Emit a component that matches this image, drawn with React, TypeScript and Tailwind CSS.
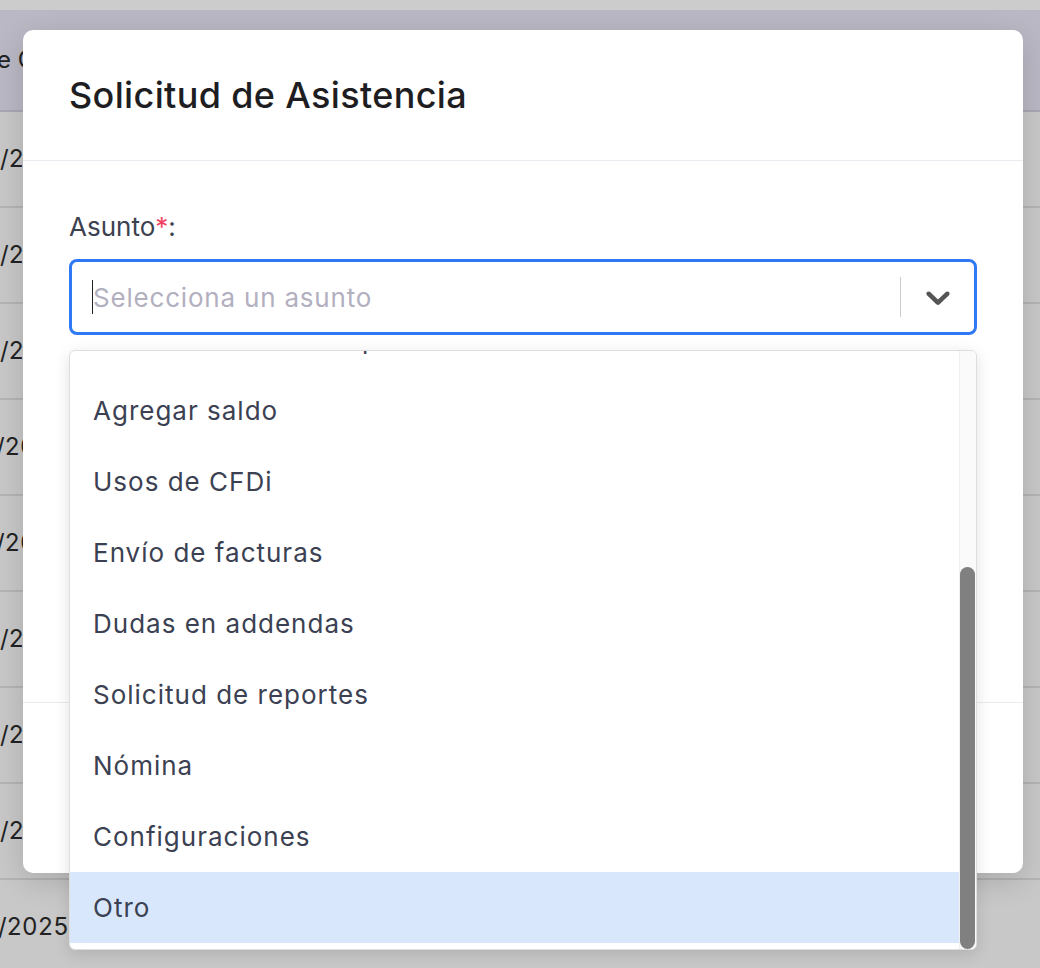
import React from 'react'

const opciones = [
  'Facturación',
  'Timbres',
  'Cancelación de comprobantes',
  'Agregar saldo',
  'Usos de CFDi',
  'Envío de facturas',
  'Dudas en addendas',
  'Solicitud de reportes',
  'Nómina',
  'Configuraciones',
  'Otro',
]

const filas = [
  { fecha: '12/03/2025', desfase: '-ml-[71px]' },
  { fecha: '12/03/2025', desfase: '-ml-[71px]' },
  { fecha: '11/03/2025', desfase: '-ml-[71px]' },
  { fecha: '10/03/2025', desfase: '-ml-[75px]' },
  { fecha: '10/03/2025', desfase: '-ml-[75px]' },
  { fecha: '07/03/2025', desfase: '-ml-[71px]' },
  { fecha: '06/03/2025', desfase: '-ml-[71px]' },
  { fecha: '05/03/2025', desfase: '-ml-[71px]' },
  { fecha: '04/03/2025', desfase: '-ml-[73px]' },
]

function Chevron() {
  return (
    <svg viewBox="0 0 20 20" className="w-[40px] h-[40px] fill-[#555555]">
      <path d="M4.516 7.548c0.436-0.446 1.043-0.481 1.576 0l3.908 3.747 3.908-3.747c0.533-0.481 1.141-0.446 1.574 0 0.436 0.445 0.408 1.197 0 1.615-0.406 0.418-4.695 4.502-4.695 4.502-0.217 0.223-0.502 0.335-0.787 0.335s-0.57-0.112-0.789-0.335c0 0-4.287-4.084-4.695-4.502s-0.436-1.17 0-1.615z" />
    </svg>
  )
}

export default function App() {
  return (
    <div className="relative h-[968px] w-[1040px] overflow-hidden bg-[#c8c8c8] font-['Inter',sans-serif]">
      {/* pagina detras del modal */}
      <div className="h-[10px] bg-[#cccccc]" />
      <div className="h-[102px] bg-[#bab8c4] border-b-2 border-[#a9a7b2] flex items-center text-[24px] text-[#222222] whitespace-nowrap">
        <span className="-ml-[3px]">e Creación</span>
      </div>
      {filas.map((f, i) => (
        <div key={i} className="h-[96px] border-b-2 border-[#b4b4b4] flex items-center text-[24px] text-[#222222] whitespace-nowrap tabular-nums">
          <span className={f.desfase}>{f.fecha}</span>
        </div>
      ))}

      {/* modal */}
      <div className="absolute left-[23px] top-[30px] w-[1000px] h-[843px] bg-white rounded-[10px] shadow-[0_8px_30px_rgba(0,0,0,0.15)] flex flex-col">
        <div className="h-[131px] px-[46px] flex items-center border-b border-[#e8ecf0]">
          <h2 className="text-[36px] font-medium tracking-[0.35px] text-[#1e1e22]">Solicitud de Asistencia</h2>
        </div>

        <div className="h-[542px] px-[46px] pt-[51px] border-b border-[#e8ecf0]">
          <label className="block text-[26px] leading-[30px] text-[#3d4250] mb-[17px]">
            Asunto<span className="text-[#ef4461]">*</span>:
          </label>
          <div className="relative">
            <div className="h-[76px] border-[3px] border-[#3079f4] rounded-[8px] flex items-center">
              <div className="flex-1 flex items-center pl-[20px]">
                <span className="w-px h-[34px] bg-[#222222]" />
                <span className="text-[26px] tracking-[0.8px] text-[#b2b0bf]">Selecciona un asunto</span>
              </div>
              <span className="w-px h-[40px] bg-[#cccccc]" />
              <div className="w-[73px] flex items-center justify-center">
                <Chevron />
              </div>
            </div>

            {/* menu desplegable */}
            <div className="absolute left-0 right-0 top-[91px] z-10 h-[600px] bg-white border border-[#dedede] rounded-[6px] shadow-[0_4px_16px_rgba(0,0,0,0.12)] overflow-hidden">
              <div className="h-full flex flex-col justify-end pb-[6px] pr-[16px]">
                {opciones.map((o) => (
                  <div
                    key={o}
                    className={`shrink-0 h-[71px] flex items-center px-[23px] text-[26px] tracking-[1px] text-[#3b4152] ${o === 'Otro' ? 'bg-[#d9e7fc]' : ''}`}
                  >
                    {o}
                  </div>
                ))}
              </div>
              {/* barra de desplazamiento */}
              <div className="absolute right-0 top-0 bottom-0 w-[17px] bg-[#fafafa] border-l border-[#f0f0f0] flex flex-col justify-end">
                <div className="h-[382px] w-[15px] rounded-full bg-[#808080]" />
              </div>
            </div>
          </div>
        </div>

        <div className="flex-1 px-[46px] flex items-center justify-end gap-4">
          <button className="h-[52px] px-6 rounded-[8px] border border-[#d0d4db] text-[20px] text-[#3d4250]">Cancelar</button>
          <button className="h-[52px] px-6 rounded-[8px] bg-[#2f78f2] text-[20px] text-white">Enviar</button>
        </div>
      </div>
    </div>
  )
}
